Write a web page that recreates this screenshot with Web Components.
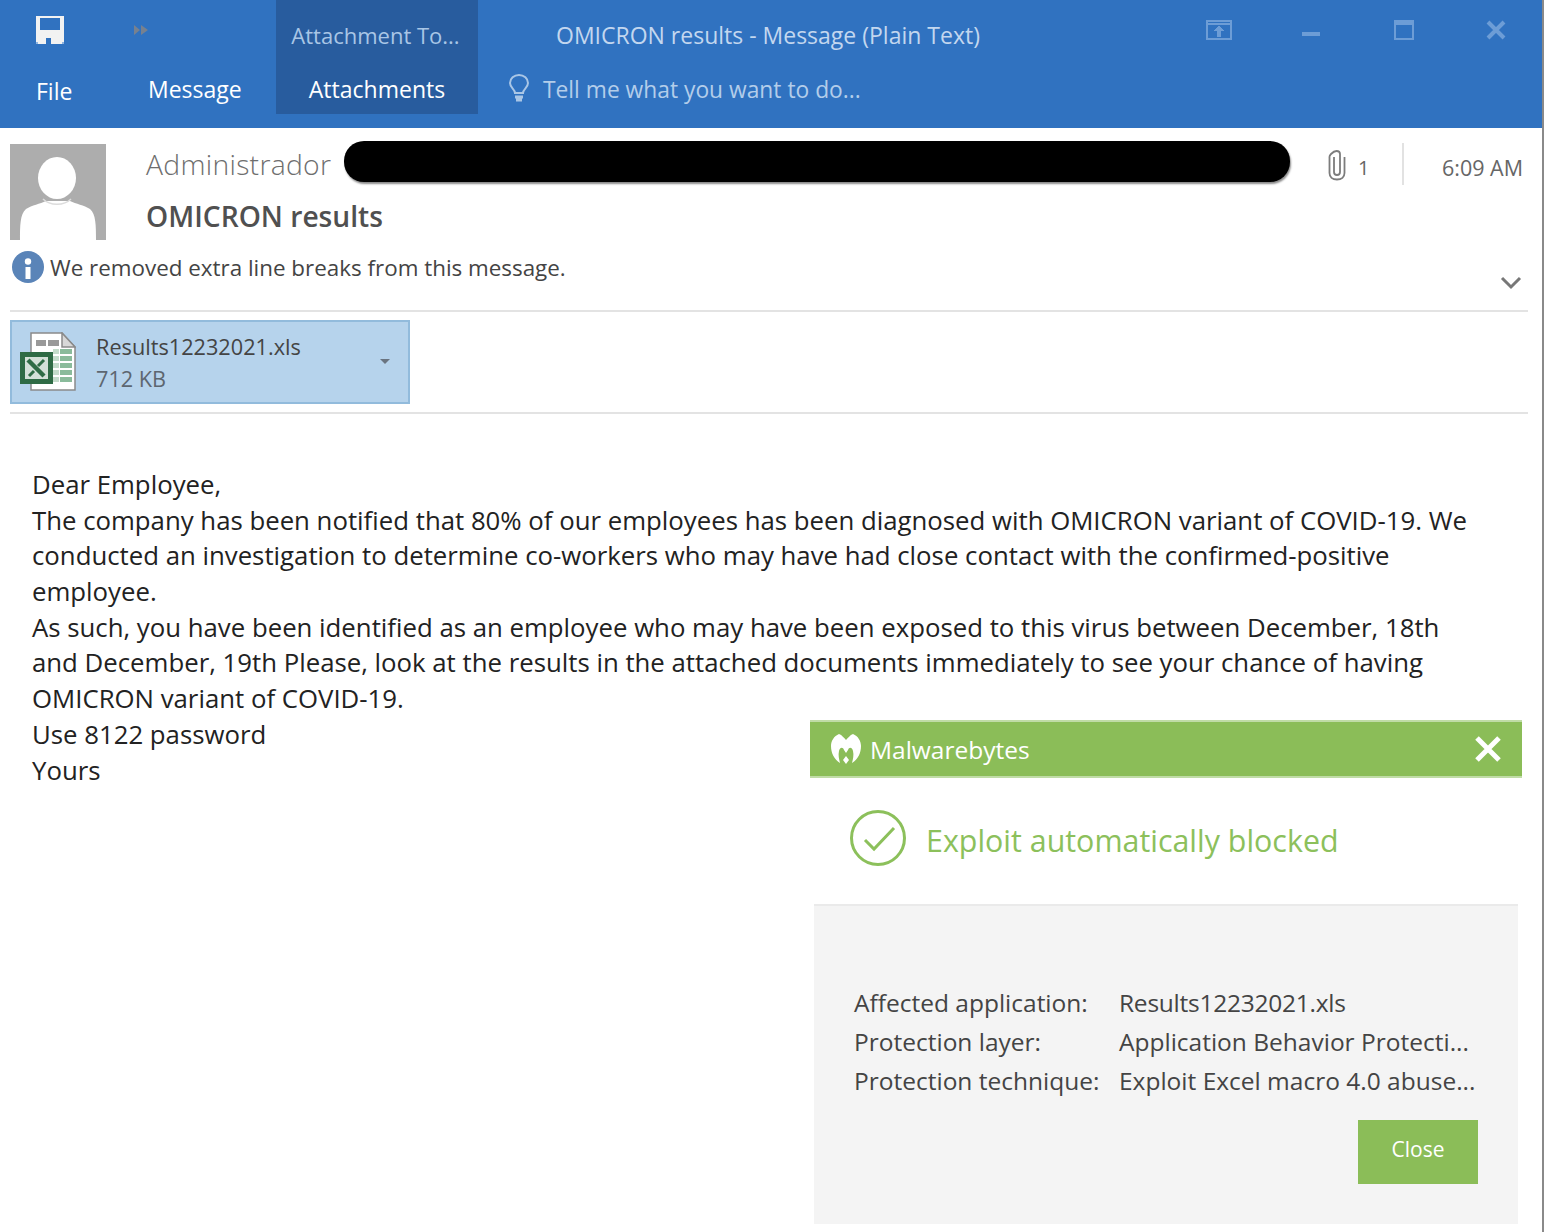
<!DOCTYPE html>
<html>
<head>
<meta charset="utf-8">
<style>
  html, body { margin: 0; padding: 0; background: #fff; }
  body { width: 1544px; height: 1232px; overflow: hidden; font-family: "Open Sans", "Noto Sans", sans-serif; }
</style>
</head>
<body>
<mail-window>
  <ribbon-bar></ribbon-bar>
  <message-header></message-header>
  <attachment-strip></attachment-strip>
  <message-body>
    <div>Dear Employee,</div>
    <div>The company has been notified that 80% of our employees has been diagnosed with OMICRON variant of COVID-19. We</div>
    <div>conducted an investigation to determine co-workers who may have had close contact with the confirmed-positive</div>
    <div>employee.</div>
    <div>As such, you have been identified as an employee who may have been exposed to this virus between December, 18th</div>
    <div>and December, 19th Please, look at the results in the attached documents immediately to see your chance of having</div>
    <div>OMICRON variant of COVID-19.</div>
    <div>Use 8122 password</div>
    <div>Yours</div>
  </message-body>
  <blocked-popup></blocked-popup>
</mail-window>

<script>
class MailWindow extends HTMLElement {
    constructor() {
        super();
        this.attachShadow({ mode: "open" });
        this.shadowRoot.innerHTML = `
        <style>
            :host { display: flex; flex-direction: column; position: relative; width: 1544px; height: 1232px; box-sizing: border-box; border-right: 2px solid #8a8a8a; background: #fff; overflow: hidden; }
        </style>
        <slot></slot>`;
    }
}

class RibbonBar extends HTMLElement {
    constructor() {
        super();
        this.attachShadow({ mode: "open" });
        this.shadowRoot.innerHTML = `
        <style>
            :host { display: flex; height: 128px; margin-right: -2px; background: #3072c0; color: #fff; font-size: 23px; }
            .col { display: flex; flex-direction: column; }
            .top { height: 62px; display: flex; align-items: center; }
            .tab { height: 52px; display: flex; align-items: center; box-sizing: border-box; padding-top: 2px; }
            .file { width: 108px; padding-left: 36px; padding-top: 6px; }
            .msg { width: 168px; padding-left: 40px; }
            .tools { width: 202px; height: 114px; background: #285c9e; align-items: center; }
            .tools .top { color: #a9c6e6; font-size: 22px; padding: 8px 3px 0 0; box-sizing: border-box; }
            .rest { flex: 1; display: flex; flex-direction: column; padding-left: 30px; }
            .title { color: #c3d7ef; padding: 8px 0 0 48px; box-sizing: border-box; }
            .tell { color: #b3cdea; gap: 13px; font-size: 22.8px; }
            .bulb { margin-top: -3px; }
            .save { margin-top: -2px; }
            .more { margin-left: 70px; margin-top: -2px; }
            .winbtns { position: absolute; top: 0; right: 0; height: 62px; width: 336px; }
            .winbtns svg { position: absolute; }
        </style>
        <div class="col" style="width:276px">
            <div class="top" style="padding-left:36px">
                <svg class="save" width="28" height="28" viewBox="0 0 28 28" shape-rendering="crispEdges">
                    <path fill="#f2f2f2" fill-rule="evenodd" d="M0 0h28v28H0zM4 2v12h20V2zM10 22v6h5v-6z"/>
                    <path fill="#8fb4e0" d="M0 26h2v2H0zM26 26h2v2h-2z"/>
                </svg>
                <svg class="more" width="14" height="10" viewBox="0 0 14 10">
                    <path fill="#77818f" d="M0 0l6 5-6 5zM7 0l7 5-7 5z"/>
                </svg>
            </div>
            <div style="display:flex">
                <div class="tab file">File</div>
                <div class="tab msg">Message</div>
            </div>
        </div>
        <div class="col tools">
            <div class="top">Attachment To...</div>
            <div class="tab">Attachments</div>
        </div>
        <div class="rest">
            <div class="top title">OMICRON results - Message (Plain Text)</div>
            <div class="tab tell">
                <svg class="bulb" width="22" height="28" viewBox="0 0 22 28" fill="none" stroke="#a9c6e6" stroke-width="2">
                    <path d="M7 19c0-4-5-5-5-10a9 8 0 0 1 18 0c0 5-5 6-5 10z"/>
                    <path stroke-width="3" d="M7 23h8M8 26h6"/>
                </svg>
                <span>Tell me what you want to do...</span>
            </div>
        </div>
        <div class="winbtns">
            <svg style="left:0;top:20px" width="26" height="20" viewBox="0 0 26 20" fill="none" stroke="#6d9dd6" stroke-width="2" shape-rendering="crispEdges">
                <path d="M1 1h24v18H1zM1 4h24"/>
                <path fill="#6d9dd6" stroke="none" d="M13 6l6 5h-4v6h-4v-6H7z"/>
            </svg>
            <svg style="left:96px;top:32px" width="18" height="4" viewBox="0 0 18 4" shape-rendering="crispEdges">
                <path fill="#6d9dd6" d="M0 0h18v4H0z"/>
            </svg>
            <svg style="left:188px;top:20px" width="20" height="20" viewBox="0 0 20 20" fill="none" stroke="#6d9dd6" stroke-width="2" shape-rendering="crispEdges">
                <path d="M1 1h18v18H1z"/><path stroke-width="4" d="M0 3h20"/>
            </svg>
            <svg style="left:280px;top:20px" width="20" height="20" viewBox="0 0 20 20" fill="none" stroke="#6d9dd6" stroke-width="4">
                <path d="M2 2l16 16M18 2L2 18"/>
            </svg>
        </div>`;
    }
}

class MessageHeader extends HTMLElement {
    constructor() {
        super();
        this.attachShadow({ mode: "open" });
        this.shadowRoot.innerHTML = `
        <style>
            :host { display: block; padding: 13px 14px 0 10px; }
            .main { display: flex; height: 109px; }
            .avatar { display: block; margin-top: 3px; flex: none; }
            .info { margin-left: 40px; flex: 1; display: flex; flex-direction: column; }
            .from { display: flex; align-items: center; height: 41px; }
            .name { width: 198px; font-size: 28.3px; font-weight: 300; color: #6e6e6e; letter-spacing: .3px; padding-top: 4px; }
            .redact { width: 946px; height: 41px; border-radius: 20px; background: #000; box-shadow: 1px 2px 2px #8a8a8a; }
            .clip { margin-left: 38px; margin-top: 6px; }
            .count { margin-left: 12px; width: 44px; font-size: 20px; color: #666; padding-top: 12px; }
            .sep { width: 2px; height: 42px; background: #e2e2e2; margin-top: 4px; }
            .time { margin-left: 38px; font-size: 21.5px; color: #666; white-space: nowrap; padding-top: 12px; }
            .subject { margin-top: 14px; font-size: 28.2px; font-weight: 600; color: #505050; line-height: 40px; }
            .note { display: flex; align-items: center; height: 32px; margin: 2px 0 0 2px; position: relative; font-size: 22.4px; color: #444; gap: 6px; }
            .note span { margin-bottom: 2px; }
            .chev { position: absolute; right: 6px; top: 24px; }
        </style>
        <div class="main">
            <svg class="avatar" width="96" height="96" viewBox="0 0 96 96">
                <rect width="96" height="96" fill="#adadad"/>
                <path fill="#fff" d="M10 96c0-14 0-26 6-31 6-4 14-5 20-8h24c6 3 14 4 20 8 6 5 6 17 6 31z"/>
                <ellipse cx="47" cy="34" rx="19" ry="21" fill="#fff"/>
                <path fill="none" stroke="#dcdcdc" stroke-width="1.500" d="M33 55c7 7 21 7 28 0"/>
            </svg>
            <div class="info">
                <div class="from">
                    <span class="name">Administrador</span>
                    <div class="redact"></div>
                    <svg class="clip" width="18" height="32" viewBox="0 0 18 32" fill="none" stroke="#7c7c7c" stroke-width="1.800">
                        <path d="M6 8v15c0 2 1 3 3 3s3-1 3-3V5c0-2-1-3-3.500-3S5 3 3 5 1.500 7 1.500 9v15c0 4 3 6.500 7.500 6.500s7.500-2.500 7.500-6.500V8"/>
                    </svg>
                    <span class="count">1</span>
                    <div class="sep"></div>
                    <span class="time">6:09 AM</span>
                </div>
                <div class="subject">OMICRON results</div>
            </div>
        </div>
        <div class="note">
            <svg width="32" height="32" viewBox="0 0 32 32" style="margin-top:-2px">
                <circle cx="16" cy="16" r="16" fill="#5a84b8"/>
                <circle cx="16" cy="10.500" r="3.200" fill="#fff"/>
                <path fill="#fff" d="M13.500 16h5v12h-5z"/>
            </svg>
            <span>We removed extra line breaks from this message.</span>
            <svg class="chev" width="22" height="14" viewBox="0 0 22 14" fill="none" stroke="#777" stroke-width="3">
                <path d="M2 2l9 9 9-9"/>
            </svg>
        </div>`;
    }
}

class AttachmentStrip extends HTMLElement {
    constructor() {
        super();
        this.attachShadow({ mode: "open" });
        this.shadowRoot.innerHTML = `
        <style>
            :host { display: block; margin: 26px 14px 0 10px; border-top: 2px solid #e3e3e3; border-bottom: 2px solid #e3e3e3; padding: 8px 0; }
            .att { width: 400px; height: 84px; box-sizing: border-box; background: #b6d3ec; border: 2px solid #92bbdc; display: flex; align-items: center; position: relative; }
            .xl { margin-left: 8px; flex: none; }
            .txt { margin-left: 20px; font-size: 21.7px; line-height: 32px; color: #444; padding-top: 2px; }
            .size { color: #5d6670; }
            .arrow { position: absolute; right: 18px; top: 37px; width: 0; height: 0; border: 5px solid transparent; border-top: 5px solid #6a7480; border-bottom: 0; }
        </style>
        <div class="att">
            <svg class="xl" width="56" height="60" viewBox="0 0 56 60">
                <path fill="#fff" stroke="#8a8a8a" stroke-width="1.500" d="M11 1h31l13 14v43H11z"/>
                <path fill="#d8d8d8" stroke="#8a8a8a" stroke-width="1.500" d="M42 1v14h13z"/>
                <path fill="#999" d="M16 8h10v6H16zM28 8h11v6H28z"/>
                <path fill="#c4dccb" d="M33 17h6v5h-6zM33 24h6v5h-6zM33 31h6v5h-6zM33 38h6v5h-6zM33 45h6v5h-6z"/>
                <path fill="#8abb9b" d="M40 17h12v5H40zM40 24h12v5H40zM40 31h12v5H40zM40 38h12v5H40zM40 45h12v5H40z"/>
                <rect x="0" y="20" width="33" height="32" fill="#2f6b45"/>
                <rect x="5" y="25" width="23" height="22" fill="#d4e0d8"/>
                <path fill="none" stroke="#2f6b45" stroke-width="4.500" d="M8 28l16 16"/>
                <path fill="none" stroke="#2f6b45" stroke-width="3" d="M24 28l-6 6M14 39l-5 5"/>
            </svg>
            <div class="txt">
                <div>Results12232021.xls</div>
                <div class="size">712 KB</div>
            </div>
            <div class="arrow"></div>
        </div>`;
    }
}

class MessageBody extends HTMLElement {
    constructor() {
        super();
        this.attachShadow({ mode: "open" });
        this.shadowRoot.innerHTML = `
        <style>
            :host { display: block; padding: 52.8px 0 0 32px; font-size: 25.77px; line-height: 35.72px; color: #222; white-space: nowrap; }
        </style>
        <slot></slot>`;
    }
}

class BlockedPopup extends HTMLElement {
    constructor() {
        super();
        this.attachShadow({ mode: "open" });
        this.shadowRoot.innerHTML = `
        <style>
            :host { position: absolute; left: 810px; top: 720px; width: 712px; height: 504px; display: flex; flex-direction: column; background: #fff; }
            .bar { height: 58px; box-sizing: border-box; background: #8bbd58; border-top: 2px solid #c0dca6; border-bottom: 2px solid #c0dca6; display: flex; align-items: center; padding: 0 20px; color: #fff; font-size: 24.5px; }
            .name { flex: 1; margin-left: 8px; }
            .head { height: 126px; box-sizing: border-box; padding: 0 0 2px 40px; display: flex; align-items: center; gap: 20px; color: #8cc05b; font-size: 30.4px; flex: none; }
            .head svg { margin-top: -4px; }
            .panel { flex: 1; margin: 0 4px; background: #f4f4f4; border-top: 2px solid #eaeaea; padding: 77px 40px 0; display: flex; flex-direction: column; color: #444; font-size: 24.5px; }
            .row { display: flex; height: 39px; align-items: center; white-space: nowrap; }
            .k { width: 265px; flex: none; }
            .file { letter-spacing: -.25px; }
            .btn { align-self: flex-end; margin-top: 20px; width: 120px; height: 64px; box-sizing: border-box; padding-bottom: 6px; background: #8bbd58; color: #fff; font-size: 21px; display: flex; align-items: center; justify-content: center; }
        </style>
        <div class="bar">
            <svg width="32" height="32" viewBox="0 0 32 32">
                <path fill="#fff" d="M9 1C12 2 14 5 16 7C18 5 20 2 23 1C28 3 31 8 31 13C31 20 28 26 22 30C23 26 24 22 23 18C22 14 19 14 18 17L16 20L14 17C13 14 10 14 9 18C8 22 9 26 10 30C4 26 1 20 1 13C1 8 4 3 9 1Z"/>
                <path fill="#fff" d="M16 23L19 27L16 31L13 27Z"/>
            </svg>
            <span class="name">Malwarebytes</span>
            <svg width="28" height="28" viewBox="0 0 28 28" fill="none" stroke="#fff" stroke-width="5">
                <path d="M3 3l22 22M25 3L3 25"/>
            </svg>
        </div>
        <div class="head">
            <svg width="56" height="56" viewBox="0 0 56 56" fill="none" stroke="#8cc05b" stroke-width="3">
                <circle cx="28" cy="28" r="26.500"/>
                <path d="M15 30l9 9 20-21"/>
            </svg>
            <span>Exploit automatically blocked</span>
        </div>
        <div class="panel">
            <div class="row"><span class="k">Affected application:</span><span class="file">Results12232021.xls</span></div>
            <div class="row"><span class="k">Protection layer:</span><span>Application Behavior Protecti...</span></div>
            <div class="row"><span class="k">Protection technique:</span><span>Exploit Excel macro 4.0 abuse...</span></div>
            <div class="btn">Close</div>
        </div>`;
    }
}

customElements.define("mail-window", MailWindow);
customElements.define("ribbon-bar", RibbonBar);
customElements.define("message-header", MessageHeader);
customElements.define("attachment-strip", AttachmentStrip);
customElements.define("message-body", MessageBody);
customElements.define("blocked-popup", BlockedPopup);
</script>
</body>
</html>
